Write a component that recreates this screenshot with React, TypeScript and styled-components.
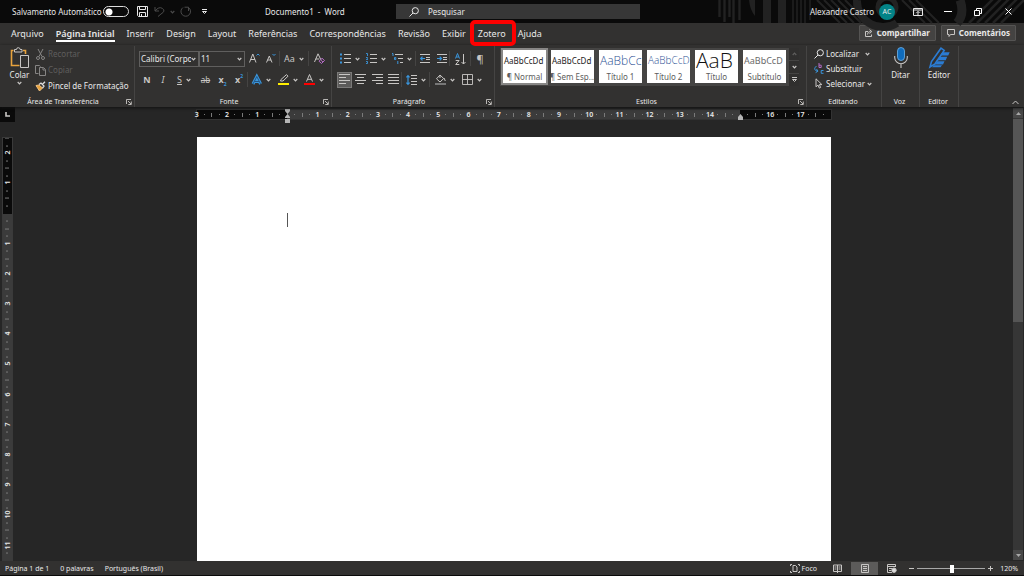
import React from "react";
import styled, { createGlobalStyle, css } from "styled-components";

const c = {
  title: "#0a0a0a",
  ribbon: "#323130",
  canvas: "#262626",
  text: "#e8e8e8",
  dim: "#5f5e5d",
  line: "#454443",
  blue: "#3a96dd",
  icon: "#c8c6c4",
};

const GlobalStyle = createGlobalStyle`
  * { box-sizing: border-box; }
  body { margin: 0; background: ${c.canvas}; color: ${c.text}; font: 8px/12px "Noto Sans", "Open Sans", sans-serif; }
  button, input, select { font: inherit; color: inherit; }
  button { display: inline-flex; align-items: center; justify-content: center; padding: 0; border: 0; background: none; white-space: nowrap; }
  button:disabled { color: ${c.dim}; }
  svg { display: block; flex: none; overflow: visible; }
`;

/* ---------- Shell ---------- */

const Shell = styled.div`
  display: flex;
  flex-direction: column;
  height: 100vh;
  overflow: hidden;
`;

/* ---------- Title bar ---------- */

const TitleBar = styled.header`
  position: relative;
  display: flex;
  align-items: center;
  height: 23px;
  flex: none;
  background: ${c.title};
`;

const Backdrop = styled.svg`
  position: absolute;
  top: 0;
  right: 0;
`;

const QuickAccess = styled.div`
  display: flex;
  align-items: center;
  width: 265px;
  padding-left: 12px;
`;

const AutoSave = styled.label`
  display: flex;
  align-items: center;
  justify-content: space-between;
  width: 117px;
  margin-right: 7px;
  white-space: nowrap;
`;

const Toggle = styled.input`
  appearance: none;
  width: 26px;
  height: 11px;
  margin: 0;
  border: 1px solid #dcdcdc;
  border-radius: 6px;
  background: radial-gradient(circle at 5px 5px, #fff 3px, transparent 4px);
`;

const QuickButton = styled.button<{ $w: number; $dim?: boolean }>`
  width: ${(p) => p.$w}px;
  height: 20px;
  color: ${(p) => (p.$dim ? "#4a4a4a" : c.text)};
`;

const DocTitle = styled.h1`
  width: 131px;
  margin: 0;
  font-size: 8px;
  font-weight: 400;
  white-space: pre;
`;

const SearchBox = styled.label`
  display: flex;
  align-items: center;
  gap: 9px;
  width: 244px;
  height: 15px;
  padding-left: 13px;
  background: #373737;
`;

const SearchInput = styled.input`
  flex: 1;
  min-width: 0;
  padding: 0;
  border: 0;
  outline: 0;
  background: none;
  &::placeholder { color: ${c.text}; opacity: 1; }
`;

const WindowArea = styled.div`
  position: relative;
  display: flex;
  align-items: center;
  margin-left: auto;
  padding-right: 1px;
`;

const Avatar = styled.span`
  width: 16px;
  height: 16px;
  margin: 0 8px 0 5px;
  border-radius: 50%;
  background: #038387;
  font-size: 7px;
  line-height: 16px;
  text-align: center;
`;

const WindowButton = styled.button`
  width: 30px;
  height: 23px;
`;

/* ---------- Tabs ---------- */

const TabBar = styled.nav`
  display: flex;
  align-items: flex-start;
  height: 22px;
  flex: none;
  padding: 2px 8px 0 11px;
  background: ${c.ribbon};
`;

const Tabs = styled.div`
  display: flex;
  gap: 12px;
  padding-top: 2px;
`;

const Tab = styled.a<{ $active?: boolean }>`
  position: relative;
  border-bottom: 2px solid ${(p) => (p.$active ? "#fff" : "transparent")};
  color: ${c.text};
  font-size: 9px;
  line-height: 13px;
  font-weight: ${(p) => (p.$active ? 600 : 400)};
  text-decoration: none;
`;

const Marker = styled.span`
  position: absolute;
  inset: -7px -10px -6px -8px;
  z-index: 2;
  border: 4px solid #fe0000;
  border-radius: 5px;
`;

const TabActions = styled.div`
  display: flex;
  gap: 5px;
  margin-left: auto;
`;

const ActionButton = styled.button`
  && {
    gap: 4px;
    height: 16px;
    padding: 0 5px;
    border: 1px solid #555453;
    border-radius: 1px;
    background: #444342;
    font-size: 8px;
    font-weight: 700;
  }
`;

/* ---------- Ribbon ---------- */

const Ribbon = styled.div`
  position: relative;
  z-index: 1;
  display: flex;
  height: 62px;
  flex: none;
  padding-top: 1px;
  background: ${c.ribbon};
  box-shadow: 0 1px 3px #111;
`;

const GroupBox = styled.section<{ $w: number }>`
  display: flex;
  flex-direction: column;
  width: ${(p) => p.$w}px;
  height: 61px;
  border-right: 1px solid ${c.line};
`;

const GroupBody = styled.div<{ $pad?: number; $row?: boolean }>`
  display: flex;
  flex: none;
  flex-direction: ${(p) => (p.$row ? "row" : "column")};
  height: 49px;
  padding-left: ${(p) => p.$pad ?? 0}px;
`;

const GroupFooter = styled.footer`
  display: flex;
  flex: none;
  align-items: center;
  height: 12px;
  padding: 1px 2px 0 0;
  font-size: 7px;
`;

const GroupName = styled.span`
  flex: 1;
  text-align: center;
  white-space: nowrap;
`;

const TallButton = styled.button<{ $w: number }>`
  && {
    flex-direction: column;
    justify-content: flex-start;
    width: ${(p) => p.$w}px;
    padding-top: 1px;
  }
`;

const Stack = styled.div<{ $pitch: number }>`
  display: grid;
  grid-auto-rows: ${(p) => p.$pitch}px;
  justify-items: start;
`;

const LineButton = styled.button`
  && { gap: 2px; }
`;

const Tools = styled.div`
  padding-top: 2px;
`;

const ToolRow = styled.div`
  display: flex;
  align-items: center;
  height: 21px;
`;

const Tool = styled.button<{ $w: number; $on?: boolean }>`
  && {
    width: ${(p) => p.$w}px;
    height: 16px;
    gap: 4px;
    ${(p) =>
      p.$on &&
      css`
        background: #5c5b5a;
        box-shadow: inset 0 0 0 1px #7b7a79;
      `}
  }
`;

const Separator = styled.i`
  width: 1px;
  height: 15px;
  background: ${c.line};
`;

const Letter = styled.span<{ $size?: number; $italic?: boolean; $underline?: boolean; $strike?: boolean; $bold?: boolean }>`
  color: ${c.icon};
  font-size: ${(p) => p.$size ?? 9}px;
  font-weight: ${(p) => (p.$bold ? 700 : 400)};
  font-style: ${(p) => (p.$italic ? "italic" : "normal")};
  text-decoration: ${(p) => (p.$underline ? "underline" : p.$strike ? "line-through" : "none")};
`;

const Script = styled.span<{ $up?: boolean }>`
  align-self: ${(p) => (p.$up ? "flex-start" : "flex-end")};
  margin-left: -4px;
  color: ${c.blue};
  font-size: 5px;
  font-weight: 700;
  line-height: 8px;
`;

const Picker = styled.label<{ $w: number }>`
  display: flex;
  align-items: center;
  width: ${(p) => p.$w}px;
  height: 16px;
  padding-right: 2px;
  border: 1px solid #605f5e;
`;

const PickerSelect = styled.select`
  appearance: none;
  flex: 1;
  min-width: 0;
  padding: 0 0 0 1px;
  border: 0;
  outline: 0;
  background: none;
  text-overflow: clip;
`;

/* ---------- Style gallery ---------- */

const Gallery = styled.div`
  display: flex;
  width: 299px;
  height: 38px;
  background: #454443;
`;

const Tiles = styled.div`
  display: flex;
  gap: 5px;
  flex: 1;
  padding: 2px 0 0 3px;
`;

const Tile = styled.button<{ $on?: boolean }>`
  && {
    flex-direction: column;
    width: 43px;
    height: 33px;
    overflow: hidden;
    background: #fff;
    box-shadow: ${(p) => (p.$on ? "0 0 0 2px #888786" : "none")};
  }
`;

const Sample = styled.span<{ $size: number; $color: string; $light?: boolean }>`
  align-self: stretch;
  height: 21px;
  padding-left: 1px;
  overflow: hidden;
  color: ${(p) => p.$color};
  font-family: ${(p) => (p.$light ? '"Open Sans", sans-serif' : "inherit")};
  font-size: ${(p) => p.$size}px;
  font-weight: ${(p) => (p.$light ? 300 : 400)};
  line-height: 21px;
  text-align: left;
`;

const TileName = styled.span`
  color: #5c5c5c;
  line-height: 12px;
`;

const GalleryNav = styled.div`
  display: grid;
  grid-template-rows: repeat(3, 1fr);
  gap: 1px;
  width: 10px;
`;

const NavButton = styled.button`
  && { background: #302f2e; }
`;

const Collapse = styled.button`
  && {
    align-self: flex-end;
    width: 18px;
    height: 10px;
    margin-left: auto;
  }
`;

/* ---------- Work area ---------- */

const Workspace = styled.main`
  display: grid;
  grid-template-columns: 15px minmax(0, 1fr) 11px;
  grid-template-rows: 30px minmax(0, 1fr);
  flex: 1;
  min-height: 0;
`;

const TabStop = styled.button`
  && {
    width: 15px;
    height: 15px;
    background: ${c.title};
  }
`;

const HorizontalRuler = styled.div`
  display: flex;
  width: 634px;
  height: 9px;
  margin: 3px auto 0;
  background: linear-gradient(90deg, #0a0a0a 90px, #3b3b3b 90px 543px, #0a0a0a 543px);
  box-shadow: 0 0 0 1px #333;
  position: relative;
`;

const Marks = styled.div<{ $vertical?: boolean }>`
  display: flex;
  flex: 1;
  flex-direction: ${(p) => (p.$vertical ? "column" : "row")};
  margin: ${(p) => (p.$vertical ? "-4px 0" : "0 -4px")};
`;

const Mark = styled.span<{ $vertical?: boolean }>`
  display: flex;
  flex: 1 1 0;
  min-width: 0;
  min-height: 0;
  align-items: center;
  justify-content: center;
  writing-mode: ${(p) => (p.$vertical ? "vertical-rl" : "horizontal-tb")};
  transform: ${(p) => (p.$vertical ? "rotate(180deg)" : "none")};
  font-size: 7px;
  font-weight: 600;
  line-height: 9px;
`;

const Tick = styled.i<{ $long?: boolean; $vertical?: boolean }>`
  width: ${(p) => (p.$vertical ? (p.$long ? 4 : 2) : 1)}px;
  height: ${(p) => (p.$vertical ? 1 : p.$long ? 4 : 1)}px;
  background: #7a7a7a;
`;

const Indent = styled.svg<{ $x: number }>`
  position: absolute;
  left: ${(p) => p.$x}px;
  top: -1px;
`;

const VerticalRuler = styled.div`
  display: flex;
  width: 11px;
  margin-left: 2px;
  overflow: hidden;
  border: 1px solid #3a3a3a;
  background: linear-gradient(#0a0a0a 76px, #3b3b3b 76px);
`;

const Paper = styled.article`
  width: 634px;
  height: 100%;
  margin: 0 auto;
  padding: 76px 90px;
  background: #fff;
`;

const Caret = styled.i`
  display: block;
  width: 1px;
  height: 14px;
  background: #555;
`;

const ScrollBar = styled.div`
  display: flex;
  flex-direction: column;
  grid-column: 3;
  grid-row: 1 / 3;
  margin: 1px 1px 1px 0;
  background: #363636;
`;

const ScrollButton = styled.button`
  && {
    height: 10px;
    background: #484848;
  }
`;

const ScrollThumb = styled.div`
  flex: 0 1 203px;
  margin: 1px 0 auto;
  background: #555;
`;

/* ---------- Status bar ---------- */

const StatusBar = styled.footer`
  display: flex;
  align-items: center;
  height: 15px;
  flex: none;
  padding: 1px 6px 0 5px;
  border-bottom: 1px solid #0a0a0a;
  background: ${c.ribbon};
  font-size: 7px;
`;

const StatusInfo = styled.div`
  display: flex;
  gap: 11px;
`;

const StatusTools = styled.div`
  display: flex;
  align-items: center;
  margin-left: auto;
`;

const ViewButton = styled.button<{ $on?: boolean }>`
  && {
    width: 27px;
    height: 13px;
    background: ${(p) => (p.$on ? "#5c5b5a" : "none")};
  }
`;

const FocusButton = styled.button`
  && { gap: 2px; margin-right: 7px; }
`;

const ZoomControl = styled.div`
  display: flex;
  align-items: center;
  margin-left: 4px;
`;

const ZoomSlider = styled.input`
  appearance: none;
  width: 68px;
  height: 10px;
  margin: 0 3px;
  background: linear-gradient(#a8a8a8, #a8a8a8) center / 100% 1px no-repeat;
  &::-webkit-slider-thumb {
    appearance: none;
    width: 4px;
    height: 8px;
    background: #fff;
  }
`;

const ZoomValue = styled.output`
  width: 25px;
  text-align: right;
`;

/* ---------- Icons ---------- */

type GlyphProps = { w: number; h: number; color?: string; children: React.ReactNode };

const Glyph = ({ w, h, color = c.icon, children }: GlyphProps) => (
  <svg width={w} height={h} viewBox={`0 0 ${w} ${h}`} fill="none" stroke={color} strokeWidth="1" aria-hidden="true">
    {children}
  </svg>
);

const Chevron = ({ up, color = c.icon }: { up?: boolean; color?: string }) => (
  <Glyph w={5} h={4} color={color}>
    <path d={up ? "M.7 3 2.5 1.2 4.3 3" : "M.7 1 2.5 2.8 4.3 1"} strokeWidth="1.2" />
  </Glyph>
);

const Launcher = () => (
  <Glyph w={6} h={6}>
    <path d="M.5 5V.5H5M2 2l3 3M5.3 2.5v3h-3" strokeWidth=".9" />
  </Glyph>
);

const Magnifier = () => (
  <Glyph w={10} h={10} color={c.text}>
    <circle cx="6.3" cy="3.7" r="3.1" />
    <path d="M4 6 .5 9.5" />
  </Glyph>
);

const Lines = ({ kind }: { kind: "left" | "center" | "right" | "full" }) => {
  const short = { left: "M0 3.5h7M0 9.5h7", center: "M2 3.5h7M2 9.5h7", right: "M4 3.5h7M4 9.5h7", full: "M0 3.5h11M0 9.5h11" }[kind];
  return (
    <Glyph w={11} h={11}>
      <path d={`M0 .5h11M0 6.5h11${short}`} />
    </Glyph>
  );
};

const BulletIcon = () => (
  <Glyph w={11} h={11}>
    <path d="M4 1.5h7M4 5.5h7M4 9.5h7" />
    <path d="M0 1.5h2M0 5.5h2M0 9.5h2" stroke={c.blue} strokeWidth="2" />
  </Glyph>
);

const NumberIcon = () => (
  <Glyph w={11} h={11}>
    <path d="M4 1.5h7M4 5.5h7M4 9.5h7" />
    <path d="M0 .5h1.5V3M0 4.5h1.5v1L.3 6.5H2M0 8.5h1.5v2H0" stroke={c.blue} strokeWidth=".9" />
  </Glyph>
);

const LevelsIcon = () => (
  <Glyph w={11} h={11}>
    <path d="M3 1.5h8M6 5.5h5M8 9.5h3" />
    <path d="M0 .5h1V3M2.5 4.5h1.3v2H2.5zM5.8 8v3" stroke={c.blue} />
  </Glyph>
);

const IndentIcon = ({ out }: { out?: boolean }) => (
  <Glyph w={10} h={9}>
    <path d="M0 .5h10M6 3.5h4M6 5.5h4M0 8.5h10" />
    <path d={out ? "M5 4.5H1M2.5 2.7.7 4.5l1.8 1.8" : "M0 4.5h4M2.7 2.7l1.8 1.8-1.8 1.8"} stroke={c.blue} strokeWidth="1.2" />
  </Glyph>
);

const SortIcon = () => (
  <Glyph w={11} h={12}>
    <path d="M.5 5.5 2.5.5l2 5M1.2 4h2.6" stroke={c.blue} />
    <path d="M.7 7.5h3.4L.7 11.5h3.6M8.5 1v10M6.5 9l2 2 2-2" />
  </Glyph>
);

const SpacingIcon = () => (
  <Glyph w={11} h={10}>
    <path d="M5 .5h6M5 3.5h6M5 6.5h6M5 9.5h6" />
    <path d="M2 .5v9M.4 2.3 2 .6l1.6 1.7M.4 7.7 2 9.4l1.6-1.7" stroke={c.blue} strokeWidth="1.2" />
  </Glyph>
);

const FillIcon = () => (
  <Glyph w={11} h={11}>
    <path d="M5 1 1.5 4.8 5 8l3.7-3.5zM5 1v3M9 4l1.3 3" />
    <path d="M0 10h11" stroke="#777" strokeWidth="2" />
  </Glyph>
);

const BorderIcon = () => (
  <Glyph w={11} h={11}>
    <path d="M.5.5h10v10H.5zM5.5.5v10M.5 5.5h10" strokeWidth=".9" />
  </Glyph>
);

const ClearIcon = () => (
  <Glyph w={11} h={11}>
    <path d="M.5 9 4 .8 7 7M1.7 6h3.5" />
    <path d="M8 5.2 10.5 7.5 7.5 10.5 5 8.2zM6.5 6.8 9 9" stroke="#b46bc4" />
  </Glyph>
);

const HighlightIcon = () => (
  <Glyph w={11} h={11}>
    <path d="M3 5.5 8.5.6l1.5 1.6L5 7H2.5z" />
    <path d="M0 10h11" stroke="#ffee00" strokeWidth="2" />
  </Glyph>
);

const FontColorIcon = () => (
  <Glyph w={11} h={11}>
    <path d="M2.5 7.5 5.5.5l3 7M3.5 5.3h4" />
    <path d="M0 10h11" stroke="#f00" strokeWidth="2" />
  </Glyph>
);

const EffectIcon = () => (
  <Glyph w={10} h={10}>
    <path d="M1 9 4.8 1.5 8.6 9M2.7 6.5h4.2" stroke={c.blue} strokeWidth="3" />
    <path d="M1 9 4.8 1.5 8.6 9M2.7 6.5h4.2" stroke="#1a3b5c" strokeWidth=".7" />
  </Glyph>
);

const PasteIcon = () => (
  <Glyph w={20} h={22}>
    <path d="M3.5 3.5h-2v15h8M13 3.5h2.5V7" stroke="#e8a33d" strokeWidth="1.6" />
    <path d="M4.5 5V2.5h2a1.8 1.8 0 0 1 3.6 0H12V5zM10.5 8.5h8v12h-8z" />
  </Glyph>
);

const CutIcon = () => (
  <Glyph w={11} h={11} color="#868584">
    <path d="M3 0 7 7.5M8 0 4 7.5" />
    <circle cx="3" cy="9" r="1.5" />
    <circle cx="8" cy="9" r="1.5" />
  </Glyph>
);

const CopyIcon = () => (
  <Glyph w={11} h={11} color="#868584">
    <path d="M3.5 8.5h-3v-8h4l1 1M4.5 2.5h4l2 2v6h-6zM8 3v2h2" />
  </Glyph>
);

const BrushIcon = () => (
  <Glyph w={11} h={11}>
    <path d="M1 4.5 4.5 10 7.5 7 4 4z" fill="#e8a33d" stroke="#f0c080" />
    <path d="M4 3.5 6 2l3 3-1.5 2M7.5 3.3 10 .8" stroke="#ddd" strokeWidth="1.3" />
  </Glyph>
);

const ReplaceIcon = () => (
  <Glyph w={10} h={11}>
    <path d="M5 0v4.5M5 2.2h2.2v2.3H5" stroke="#b46bc4" />
    <path d="M9.5 7.5H7.2v2.8h2.3M2.5 3.5c-2.5.5-2.5 4 .5 4.5M1.6 9.7 4 8.1 2.4 5.9" stroke={c.blue} />
  </Glyph>
);

const CursorIcon = () => (
  <Glyph w={10} h={11}>
    <path d="M2 .8v8l2-1.7 1.3 3 1.3-.6L5.4 6.6h2.5z" />
  </Glyph>
);

const MicIcon = () => (
  <Glyph w={14} h={22}>
    <rect x="3.5" y=".5" width="7" height="13" rx="3.5" fill="#0f6cbd" stroke="#6fb2ea" strokeWidth=".8" />
    <path d="M.7 9v1.5a6.3 6.3 0 0 0 12.6 0V9M7 17v4" strokeWidth="1.1" />
  </Glyph>
);

const EditorIcon = () => (
  <Glyph w={21} h={22} color="#2b7cd3">
    <path d="M1 20 2.5 14.5 12 1.2l3.2 2.2L6 16.8z" strokeWidth="1.6" />
    <path d="M13.5 5.2h7.2l-1.5 3.4h-8zM11 9.8h7.2l-1.5 3.4H8.7zM8.5 14.2h7L14 17.4H6.2zM5 18.3h8l-1.5 2H3z" fill="#2b7cd3" stroke="none" />
  </Glyph>
);

const TitlePattern = () => (
  <Backdrop width="306" height="23" viewBox="0 0 306 23" fill="none" stroke="#222" aria-hidden="true">
    <path d="M1.5 0v17M6.5 0v22M11.5 0v17M15.5 0v23M21.5 0v20" strokeWidth="2.4" />
    <path d="M31 0h6v16q-5-6-6-16z" fill="#222" stroke="none" />
    <path d="M49 0v23M64 0v23" strokeWidth="8" />
    <path d="M75 0v23M79 0v23M83 0v23M87 0v23M92 0v20" strokeWidth="1.5" />
    <path d="m99 0 23 23M106 0l23 23M113 0l23 23M120 0l23 23M127 0l23 23" strokeWidth="2" />
    <path d="M139 0a26 26 0 0 0 40 23" strokeWidth="8" />
    <circle cx="169" cy="7" r="9" strokeWidth="5" />
    <path d="m184 0 23 23M191 0l23 23M198 0l23 23" strokeWidth="2" />
    <path d="M242 0q5 14-3 23" strokeWidth="9" />
    <path d="m277-3-26 26M285-3l-26 26M293-3l-26 26M301-3l-26 26M309-3l-26 26" strokeWidth="2.5" />
  </Backdrop>
);

/* ---------- Parts ---------- */

type GroupProps = { name: string; w: number; pad?: number; row?: boolean; launcher?: boolean; children: React.ReactNode };

const Group = ({ name, w, pad, row, launcher, children }: GroupProps) => (
  <GroupBox $w={w} aria-label={name}>
    <GroupBody $pad={pad} $row={row}>{children}</GroupBody>
    <GroupFooter>
      <GroupName>{name}</GroupName>
      {launcher && <button aria-label={`Opções de ${name}`}><Launcher /></button>}
    </GroupFooter>
  </GroupBox>
);

const tabs = ["Arquivo", "Página Inicial", "Inserir", "Design", "Layout", "Referências", "Correspondências", "Revisão", "Exibir", "Zotero", "Ajuda"];

const styles = [
  { name: "¶ Normal", sample: "AaBbCcDd", size: 8, color: "#222" },
  { name: "¶ Sem Esp...", sample: "AaBbCcDd", size: 8, color: "#222" },
  { name: "Título 1", sample: "AaBbCc", size: 12, color: "#2f5496", light: true },
  { name: "Título 2", sample: "AaBbCcD", size: 10, color: "#2f5496", light: true },
  { name: "Título", sample: "AaB", size: 21, color: "#111", light: true },
  { name: "Subtítulo", sample: "AaBbCcD", size: 9, color: "#6a6a6a" },
];

type RulerProps = { start: number; quarters: number; hidden: number[]; vertical?: boolean };

/* Marks advance by quarters of a centimetre, with a number on each whole one. */
const RulerMarks = ({ start, quarters, hidden, vertical }: RulerProps) => (
  <Marks $vertical={vertical}>
    {Array.from({ length: quarters + 1 }, (_, i) => {
      const q = start + i;
      const cm = Math.abs(q / 4);
      return (
        <Mark key={q} $vertical={vertical}>
          {q % 4 === 0 ? (hidden.includes(cm) ? null : cm) : <Tick $long={q % 2 === 0} $vertical={vertical} />}
        </Mark>
      );
    })}
  </Marks>
);

export default function App() {
  return (
    <Shell>
      <GlobalStyle />
      <TitleBar>
        <TitlePattern />
        <QuickAccess>
          <AutoSave>
            Salvamento Automático
            <Toggle type="checkbox" role="switch" />
          </AutoSave>
          <QuickButton $w={12} aria-label="Salvar">
            <Glyph w={11} h={11} color={c.text}><path d="M.5.5h10v10h-9l-1-1zM2.5.5v3h6v-3M2.5 10.5V6.5h6v4M4.5 8v2" /></Glyph>
          </QuickButton>
          <QuickButton $w={22} $dim aria-label="Desfazer">
            <Glyph w={11} h={11} color="#4a4a4a"><path d="M1 1v4h4M1 5q4-5 7.5-2.5T7 8L4 10.5" /></Glyph>
          </QuickButton>
          <QuickButton $w={4} aria-label="Opções de desfazer"><Chevron color="#4a4a4a" /></QuickButton>
          <QuickButton $w={22} $dim aria-label="Refazer">
            <Glyph w={11} h={11} color="#4a4a4a"><path d="M3 1.5a4.8 4.8 0 1 0 5.5 0M8.5 5V1.2h-4" /></Glyph>
          </QuickButton>
          <QuickButton $w={16} aria-label="Personalizar">
            <Glyph w={5} h={6} color={c.text}><path d="M0 .5h5M.5 2.5l2 2 2-2z" /></Glyph>
          </QuickButton>
        </QuickAccess>
        <DocTitle>{"Documento1  -  Word"}</DocTitle>
        <SearchBox>
          <Magnifier />
          <SearchInput type="search" placeholder="Pesquisar" aria-label="Pesquisar" />
        </SearchBox>
        <WindowArea>
          Alexandre Castro
          <Avatar>AC</Avatar>
          <WindowButton aria-label="Opções de exibição da faixa">
            <Glyph w={10} h={8} color={c.text}><path d="M.5.5h9v7h-9zM.5 2h9M5 7V3.5M3.4 5 5 3.4 6.6 5" /></Glyph>
          </WindowButton>
          <WindowButton aria-label="Minimizar"><Glyph w={8} h={1} color="#fff"><path d="M0 .5h8" /></Glyph></WindowButton>
          <WindowButton aria-label="Restaurar">
            <Glyph w={8} h={8} color="#fff"><path d="M.5 2.5h5v5h-5zM2.5 2.5v-2h5v5h-2" /></Glyph>
          </WindowButton>
          <WindowButton aria-label="Fechar"><Glyph w={7} h={7} color="#fff"><path d="m.5.5 6 6M6.5.5l-6 6" /></Glyph></WindowButton>
        </WindowArea>
      </TitleBar>

      <TabBar>
        <Tabs>
          {tabs.map((t) => (
            <Tab key={t} href="#" $active={t === "Página Inicial"}>
              {t}
              {t === "Zotero" && <Marker />}
            </Tab>
          ))}
        </Tabs>
        <TabActions>
          <ActionButton>
            <Glyph w={8} h={8}><path d="M3 2.5H.5v5h6V5.5M2.5 5.5q0-3 3-3M4.5.7l2.3 1.8-2.3 2" /></Glyph>
            Compartilhar
          </ActionButton>
          <ActionButton>
            <Glyph w={8} h={8}><path d="M.5.5h7v5h-4l-1.5 2v-2H.5z" /></Glyph>
            Comentários
          </ActionButton>
        </TabActions>
      </TabBar>

      <Ribbon>
        <Group name="Área de Transferência" w={135} pad={4} row launcher>
          <TallButton $w={31}>
            <PasteIcon />
            Colar
            <Chevron />
          </TallButton>
          <Stack $pitch={16}>
            <LineButton disabled><CutIcon />Recortar</LineButton>
            <LineButton disabled><CopyIcon />Copiar</LineButton>
            <LineButton><BrushIcon />Pincel de Formatação</LineButton>
          </Stack>
        </Group>

        <Group name="Fonte" w={197} pad={4} launcher>
          <Tools>
            <ToolRow>
              <Picker $w={60}>
                <PickerSelect aria-label="Fonte"><option>Calibri (Corpo)</option></PickerSelect>
                <Chevron />
              </Picker>
              <Picker $w={46}>
                <PickerSelect aria-label="Tamanho"><option>11</option></PickerSelect>
                <Chevron />
              </Picker>
              <Tool $w={18} aria-label="Aumentar fonte">
                <Glyph w={11} h={11}><path d="M.5 9.5 3.8 1 7 9.5M1.7 6.5h4.2" /><path d="M7.5 2.5 9 1l1.5 1.5" stroke={c.blue} /></Glyph>
              </Tool>
              <Tool $w={16} aria-label="Diminuir fonte">
                <Glyph w={10} h={11}><path d="M.5 9.5 3.3 3 6 9.5M1.5 7h3.6" /><path d="M6.5 1 8 2.5 9.5 1" stroke={c.blue} /></Glyph>
              </Tool>
              <Separator />
              <Tool $w={28}><Letter>Aa</Letter><Chevron /></Tool>
              <Separator />
              <Tool $w={20} aria-label="Limpar formatação"><ClearIcon /></Tool>
            </ToolRow>
            <ToolRow>
              <Tool $w={16}><Letter $bold>N</Letter></Tool>
              <Tool $w={16}><Letter $italic>I</Letter></Tool>
              <Tool $w={26}><Letter $underline>S</Letter><Chevron /></Tool>
              <Tool $w={17}><Letter $strike $size={8}>ab</Letter></Tool>
              <Tool $w={17}><Letter $bold>x</Letter><Script>2</Script></Tool>
              <Tool $w={16}><Letter $bold>x</Letter><Script $up>2</Script></Tool>
              <Separator />
              <Tool $w={26} aria-label="Efeitos de texto"><EffectIcon /><Chevron /></Tool>
              <Tool $w={27} aria-label="Realce"><HighlightIcon /><Chevron /></Tool>
              <Tool $w={26} aria-label="Cor da fonte"><FontColorIcon /><Chevron /></Tool>
            </ToolRow>
          </Tools>
        </Group>

        <Group name="Parágrafo" w={163} pad={5} launcher>
          <Tools>
            <ToolRow>
              <Tool $w={25} aria-label="Marcadores"><BulletIcon /><Chevron /></Tool>
              <Tool $w={27} aria-label="Numeração"><NumberIcon /><Chevron /></Tool>
              <Tool $w={26} aria-label="Lista de vários níveis"><LevelsIcon /><Chevron /></Tool>
              <Separator />
              <Tool $w={18} aria-label="Diminuir recuo"><IndentIcon out /></Tool>
              <Tool $w={15} aria-label="Aumentar recuo"><IndentIcon /></Tool>
              <Separator />
              <Tool $w={20} aria-label="Classificar"><SortIcon /></Tool>
              <Separator />
              <Tool $w={18}><Letter $size={11}>¶</Letter></Tool>
            </ToolRow>
            <ToolRow>
              <Tool $w={15} $on aria-label="Alinhar à esquerda"><Lines kind="left" /></Tool>
              <Tool $w={17} aria-label="Centralizar"><Lines kind="center" /></Tool>
              <Tool $w={16} aria-label="Alinhar à direita"><Lines kind="right" /></Tool>
              <Tool $w={16} aria-label="Justificar"><Lines kind="full" /></Tool>
              <Separator />
              <Tool $w={27} aria-label="Espaçamento"><SpacingIcon /><Chevron /></Tool>
              <Separator />
              <Tool $w={29} aria-label="Sombreamento"><FillIcon /><Chevron /></Tool>
              <Tool $w={25} aria-label="Bordas"><BorderIcon /><Chevron /></Tool>
            </ToolRow>
          </Tools>
        </Group>

        <Group name="Estilos" w={312} pad={5} launcher>
          <Tools>
            <Gallery>
              <Tiles>
                {styles.map((s, i) => (
                  <Tile key={s.name} $on={i === 0}>
                    <Sample $size={s.size} $color={s.color} $light={s.light}>{s.sample}</Sample>
                    <TileName>{s.name}</TileName>
                  </Tile>
                ))}
              </Tiles>
              <GalleryNav>
                <NavButton aria-label="Acima"><Chevron up color="#5f5e5d" /></NavButton>
                <NavButton aria-label="Abaixo"><Chevron /></NavButton>
                <NavButton aria-label="Mais"><Glyph w={5} h={6}><path d="M0 .5h5M.5 2.5l2 2 2-2z" /></Glyph></NavButton>
              </GalleryNav>
            </Gallery>
          </Tools>
        </Group>

        <Group name="Editando" w={75} pad={7}>
          <Stack $pitch={15}>
            <LineButton><Magnifier />Localizar&nbsp;&nbsp;<Chevron /></LineButton>
            <LineButton><ReplaceIcon />Substituir</LineButton>
            <LineButton><CursorIcon />Selecionar<Chevron /></LineButton>
          </Stack>
        </Group>

        <Group name="Voz" w={38} row>
          <TallButton $w={37}><MicIcon />Ditar</TallButton>
        </Group>

        <Group name="Editor" w={39} row>
          <TallButton $w={38}><EditorIcon />Editor</TallButton>
        </Group>

        <Collapse aria-label="Recolher faixa">
          <Glyph w={7} h={5}><path d="M.5 4 3.5 1l3 3" /></Glyph>
        </Collapse>
      </Ribbon>

      <Workspace>
        <TabStop aria-label="Parada de tabulação">
          <Glyph w={5} h={5}><path d="M1 0v4h4" strokeWidth="1.6" /></Glyph>
        </TabStop>
        <HorizontalRuler>
          <RulerMarks start={-12} quarters={84} hidden={[0, 15, 18]} />
          <Indent $x={88} width="5" height="14" viewBox="0 0 5 14" fill="#b5b5b5">
            <path d="M0 0h5v2L2.5 5 0 2zM2.5 5 5 8v1H0V8zM0 10h5v4H0z" />
          </Indent>
          <Indent $x={541} width="5" height="14" viewBox="0 0 5 14" fill="#b5b5b5">
            <path d="M2.5 5 5 8v3H0V8z" />
          </Indent>
        </HorizontalRuler>
        <ScrollBar>
          <ScrollButton aria-label="Rolar para cima"><Glyph w={5} h={3}><path d="M0 3 2.5 0 5 3z" fill="#a8a8a8" stroke="none" /></Glyph></ScrollButton>
          <ScrollThumb />
          <ScrollButton aria-label="Rolar para baixo"><Glyph w={5} h={3}><path d="M0 0 2.5 3 5 0z" fill="#a8a8a8" stroke="none" /></Glyph></ScrollButton>
        </ScrollBar>
        <VerticalRuler>
          <RulerMarks start={-10} quarters={56} hidden={[0]} vertical />
        </VerticalRuler>
        <Paper><Caret /></Paper>
      </Workspace>

      <StatusBar>
        <StatusInfo>
          <span>Página 1 de 1</span>
          <span>0 palavras</span>
          <span>Português (Brasil)</span>
        </StatusInfo>
        <StatusTools>
          <FocusButton>
            <Glyph w={10} h={9}><path d="M2 .5H.5V2M8 .5h1.5V2M2 8.5H.5V7M8 8.5h1.5V7M3 1.5h2.5L7 3v4.5H3z" /></Glyph>
            Foco
          </FocusButton>
          <ViewButton aria-label="Modo de leitura">
            <Glyph w={9} h={9}><path d="M.5 1h8v6.5h-8zM4.5 1v8M1.5 3h2M1.5 5h2M5.5 3h2M5.5 5h2" /></Glyph>
          </ViewButton>
          <ViewButton $on aria-label="Layout de impressão">
            <Glyph w={8} h={9}><path d="M.5.5h7v8h-7zM2 2.5h4M2 4.5h4M2 6.5h4" /></Glyph>
          </ViewButton>
          <ViewButton aria-label="Layout da Web">
            <Glyph w={10} h={9}><path d="M5 8.5H.5v-8h8V3M.5 2.5h8M2 4.5h3M2 6.5h2" /><circle cx="7" cy="6.2" r="2.2" fill="#ddd" /></Glyph>
          </ViewButton>
          <ZoomControl>
            <button aria-label="Reduzir"><Glyph w={5} h={5}><path d="M0 2.5h5" /></Glyph></button>
            <ZoomSlider type="range" min={0} max={100} defaultValue={52} aria-label="Zoom" />
            <button aria-label="Ampliar"><Glyph w={5} h={5}><path d="M0 2.5h5M2.5 0v5" /></Glyph></button>
            <ZoomValue>120%</ZoomValue>
          </ZoomControl>
        </StatusTools>
      </StatusBar>
    </Shell>
  );
}
